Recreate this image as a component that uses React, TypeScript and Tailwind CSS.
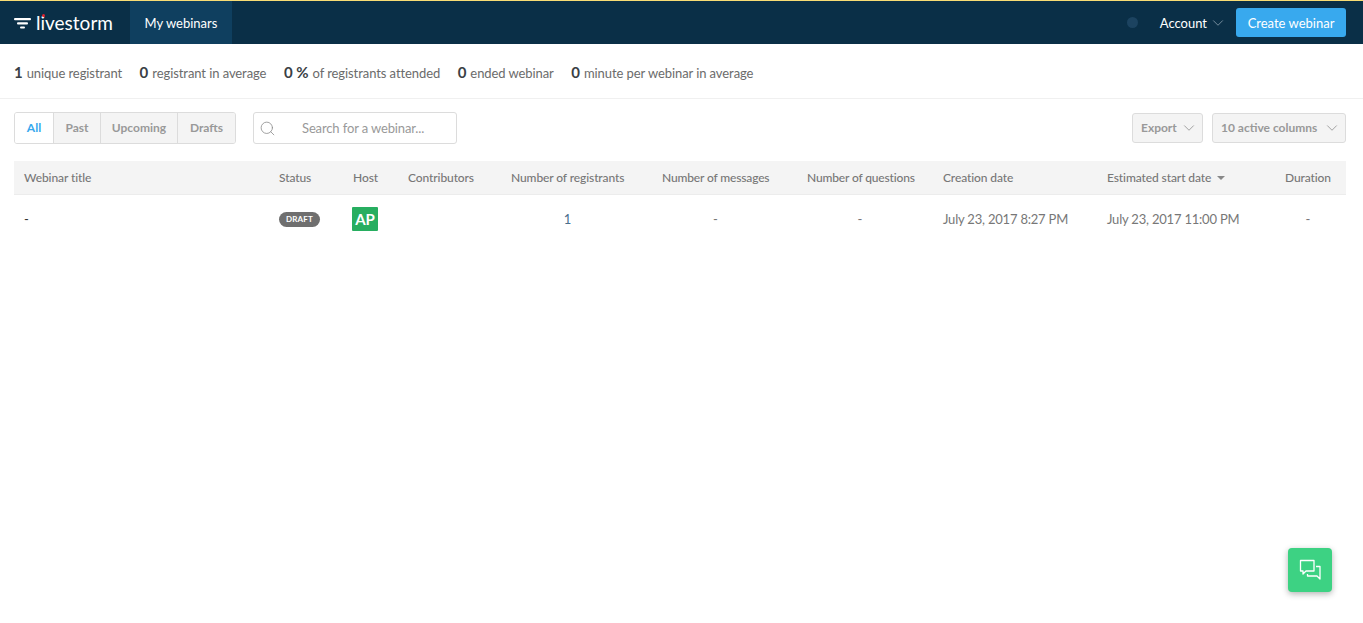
import { ChevronDown, Search } from "lucide-react";

const stats = [
  { value: "1", label: "unique registrant" },
  { value: "0", label: "registrant in average" },
  { value: "0 %", label: "of registrants attended" },
  { value: "0", label: "ended webinar" },
  { value: "0", label: "minute per webinar in average" },
];

const gridCols = "grid grid-cols-[255px_74px_55px_103px_151px_145px_136px_164px_178px_71px]";

export default function App() {
  return (
    <div className="relative min-h-[623px] bg-white font-['Lato',sans-serif] text-[13px] text-[#6b6b6b]">
      {/* Top bar */}
      <header className="flex h-[44px] items-stretch border-t border-[#f8dc74] bg-[#0a2f47]">
        <div className="flex w-[130px] items-center pl-[14px]">
          <svg width="17" height="11" viewBox="0 0 17 11" className="mt-[1px]">
            <rect x="0" y="0" width="17" height="2.2" rx="1" fill="#fff" />
            <rect x="3" y="4.2" width="11" height="2.2" rx="1" fill="#fff" />
            <rect x="6" y="8.4" width="5" height="2.2" rx="1" fill="#fff" />
          </svg>
          <span className="relative ml-[5px] text-[19px] leading-none text-white">
            livestorm
            <span className="absolute left-[6px] top-[1px] h-[3px] w-[3px] rounded-full bg-[#e0202e]" />
          </span>
        </div>
        <div className="flex w-[102px] items-center justify-center bg-[#0f3f5f] pt-[2px] text-[13px] text-white">My webinars</div>
        <div className="ml-auto flex items-center pr-[17px]">
          <span className="h-[11px] w-[11px] rounded-full bg-[#1c4360]" />
          <span className="ml-[22px] pt-[2px] text-[13px] text-white">Account</span>
          <ChevronDown className="ml-[2px] mt-[1px] h-[18px] w-[18px] text-[#7f95a5]" strokeWidth={1.2} />
          <button className="ml-[9px] h-[29px] w-[110px] rounded-[3px] bg-[#38a9ee] pt-[2px] text-[13px] text-white">Create webinar</button>
        </div>
      </header>

      {/* Stats */}
      <section className="flex h-[55px] items-center gap-[17.5px] border-b border-[#f0f0f0] pl-[14px] pt-[2px]">
        {stats.map((s) => (
          <div key={s.label} className="flex items-baseline gap-[4px]">
            <span className="text-[15px] font-bold text-[#3a3f45]">{s.value}</span>
            <span className="text-[13px] tracking-[-0.08px]">{s.label}</span>
          </div>
        ))}
      </section>

      {/* Filters */}
      <section className="flex items-center pl-[14px] pr-[17px] pt-[13px]">
        <div className="flex h-[32px] overflow-hidden rounded-[3px] border border-[#dcdcdc] text-[12px] font-bold">
          <span className="flex w-[38px] items-center justify-center bg-white text-[#38a9ee]">All</span>
          <span className="flex w-[47px] items-center justify-center border-l border-[#dcdcdc] bg-[#f4f4f4] text-[#999]">Past</span>
          <span className="flex w-[77px] items-center justify-center border-l border-[#dcdcdc] bg-[#f4f4f4] text-[#999]">Upcoming</span>
          <span className="flex w-[58px] items-center justify-center border-l border-[#dcdcdc] bg-[#f4f4f4] text-[#999]">Drafts</span>
        </div>
        <div className="ml-[17px] flex h-[32px] w-[204px] items-center rounded-[3px] border border-[#dcdcdc] pl-[5px]">
          <Search className="h-[17px] w-[17px] text-[#888]" strokeWidth={1.1} />
          <span className="ml-[26px] pt-[1px] text-[13px] tracking-[-0.13px] text-[#999]">Search for a webinar...</span>
        </div>
        <button className="ml-auto flex h-[30px] w-[71px] items-center justify-between rounded-[3px] border border-[#dcdcdc] bg-[#f4f4f4] pl-[8px] pr-[4px] text-[12px] font-bold text-[#999]">
          Export
          <ChevronDown className="h-[18px] w-[18px]" strokeWidth={1.2} />
        </button>
        <button className="ml-[9px] flex h-[30px] w-[134px] items-center justify-between rounded-[3px] border border-[#dcdcdc] bg-[#f4f4f4] pl-[8px] pr-[4px] text-[12px] font-bold text-[#999]">
          10 active columns
          <ChevronDown className="h-[18px] w-[18px]" strokeWidth={1.2} />
        </button>
      </section>

      {/* Table */}
      <section className="mx-[14px] mt-[17px] w-[1332px]">
        <div className={`${gridCols} h-[34px] items-center border-b border-[#ececec] bg-[#f4f4f4] text-[12px] font-medium tracking-[-0.1px] text-[#777]`}>
          <span className="pl-[10px]">Webinar title</span>
          <span className="pl-[10px]">Status</span>
          <span className="pl-[10px]">Host</span>
          <span className="pl-[10px]">Contributors</span>
          <span className="pl-[10px]">Number of registrants</span>
          <span className="pl-[10px] tracking-[-0.15px]">Number of messages</span>
          <span className="pl-[10px] tracking-[-0.15px]">Number of questions</span>
          <span className="pl-[10px]">Creation date</span>
          <span className="flex items-center pl-[10px]">
            Estimated start date
            <span className="ml-[6px] h-0 w-0 border-x-[4px] border-t-[4px] border-x-transparent border-t-[#888]" />
          </span>
          <span className="pl-[10px]">Duration</span>
        </div>
        <div className={`${gridCols} h-[48px] items-center text-[13px] text-[#777]`}>
          <span className="pl-[10px] pt-[1px] text-[#333]">-</span>
          <span className="pl-[10px]">
            <span className="flex h-[15px] w-[41px] items-center justify-center rounded-full bg-[#6f6f6f] text-[8px] font-bold tracking-[0.2px] text-white">DRAFT</span>
          </span>
          <span className="pl-[9px]">
            <span className="flex h-[24px] w-[26px] items-center justify-center rounded-[1px] bg-[#27ae60] text-[15px] font-bold text-white">AP</span>
          </span>
          <span />
          <span className="pr-[18px] pt-[1px] text-center text-[#4a6f8c]">1</span>
          <span className="pr-[18px] pt-[1px] text-center">-</span>
          <span className="pr-[10px] pt-[1px] text-center">-</span>
          <span className="pl-[10px] pt-[1px] tracking-[-0.2px]">July 23, 2017 8:27 PM</span>
          <span className="pl-[10px] pt-[1px] tracking-[-0.2px]">July 23, 2017 11:00 PM</span>
          <span className="pr-[5px] pt-[1px] text-center">-</span>
        </div>
      </section>

      {/* Chat launcher */}
      <button className="absolute left-[1288px] top-[548px] flex h-[44px] w-[44px] items-center justify-center rounded-[4px] bg-[#3dd283] shadow-[0_2px_6px_rgba(0,0,0,0.3)]">
        <svg width="24" height="24" viewBox="0 0 24 24" fill="none" stroke="#fff" strokeWidth="1.3" strokeLinejoin="round">
          <path d="M2.5 2.5h13.5v10.5h-8l-3 3v-3h-2.5z" />
          <path d="M18 8.5h4v12.5l-3-3h-9.5v-2" />
        </svg>
      </button>
    </div>
  );
}
